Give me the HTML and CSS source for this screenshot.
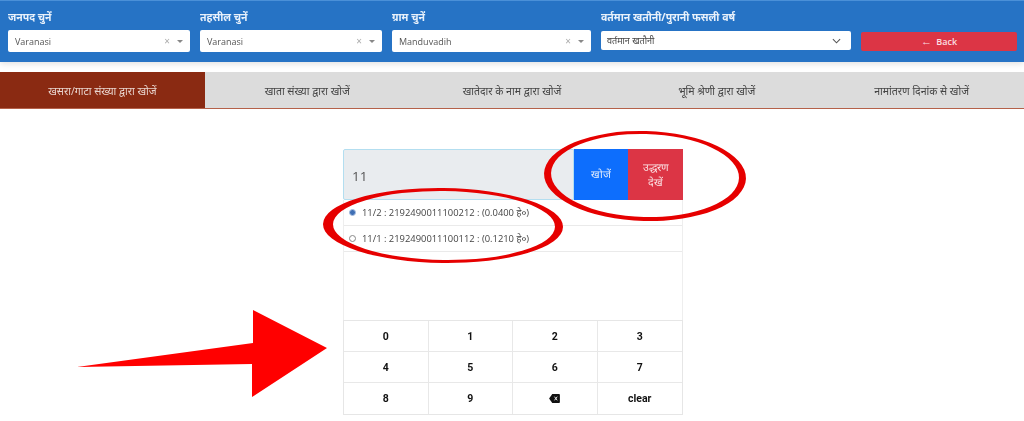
FILE: index.html
```html
<!DOCTYPE html>
<html lang="hi">
<head>
<meta charset="utf-8">
<title>खसरा खोज</title>
<link rel="stylesheet" href="styles.css">
</head>
<body>
<header class="filters">
  <div class="field">
    <label class="field-label">जनपद चुनें</label>
    <div class="combo"><span class="combo-value">Varanasi</span><span class="combo-clear">×</span><span class="combo-caret"></span></div>
  </div>
  <div class="field">
    <label class="field-label">तहसील चुनें</label>
    <div class="combo"><span class="combo-value">Varanasi</span><span class="combo-clear">×</span><span class="combo-caret"></span></div>
  </div>
  <div class="field">
    <label class="field-label">ग्राम चुनें</label>
    <div class="combo"><span class="combo-value">Manduvadih</span><span class="combo-clear">×</span><span class="combo-caret"></span></div>
  </div>
  <div class="field">
    <label class="field-label">वर्तमान खतौनी/पुरानी फसली वर्ष</label>
    <div class="select">
      <span class="select-value">वर्तमान खतौनी</span>
      <svg class="chevron" viewBox="0 0 10 6" width="9" height="6"><path d="M1 1l4 4 4-4" fill="none" stroke="#555" stroke-width="1.2"/></svg>
    </div>
  </div>
  <div class="field field-end">
    <button class="back-btn"><span class="back-arrow">←</span> Back</button>
  </div>
</header>

<nav class="tabs">
  <div class="tab tab-active">खसरा/गाटा संख्या द्वारा खोजें</div>
  <div class="tab">खाता संख्या द्वारा खोजें</div>
  <div class="tab">खातेदार के नाम द्वारा खोजें</div>
  <div class="tab">भूमि श्रेणी द्वारा खोजें</div>
  <div class="tab">नामांतरण दिनांक से खोजें</div>
</nav>

<main class="panel">
  <div class="search-row">
    <div class="search-input">11</div>
    <button class="btn-search">खोजें</button>
    <button class="btn-view">उद्धरण देखें</button>
  </div>
  <div class="results">
    <div class="result"><span class="radio radio-on"></span>11/2 : 2192490011100212 : (0.0400 हे०)</div>
    <div class="result"><span class="radio"></span>11/1 : 2192490011100112 : (0.1210 हे०)</div>
  </div>
  <div class="keypad">
    <div class="key">0</div><div class="key">1</div><div class="key">2</div><div class="key">3</div>
    <div class="key">4</div><div class="key">5</div><div class="key">6</div><div class="key">7</div>
    <div class="key">8</div><div class="key">9</div>
    <div class="key"><svg viewBox="0 0 12 10" width="11" height="9"><path d="M3.5 0H11a1 1 0 0 1 1 1V9a1 1 0 0 1-1 1H3.5L0 5Z" fill="#111"/><path d="M6 3l3 4M9 3L6 7" stroke="#fff" stroke-width="1"/></svg></div>
    <div class="key">clear</div>
  </div>
</main>

<svg class="marks" viewBox="0 0 1024 421" width="1024" height="421">
  <path transform="rotate(1.5 645 176)" fill="#e60000" fill-rule="evenodd" d="M544 176a101 45 0 1 0 202 0a101 45 0 1 0-202 0ZM551 175.5a94 41.5 0 1 0 188 0a94 41.5 0 1 0-188 0Z"/>
  <path transform="rotate(0.7 443 225.5)" fill="#e60000" fill-rule="evenodd" d="M323 225.5a120 37.5 0 1 0 240 0a120 37.5 0 1 0-240 0ZM333 225.5a111 34.5 0 1 0 222 0a111 34.5 0 1 0-222 0Z"/>
  <path d="M77 367L253 343V310L327 348L252 397V364Z" fill="#ff0000"/>
</svg>
</body>
</html>
```

FILE: styles.css
```css
* { box-sizing: border-box; }

html, body {
  margin: 0;
  padding: 0;
  height: 421px;
  overflow: hidden;
  background: #fff;
  font-family: "Open Sans", "Noto Sans", sans-serif;
  position: relative;
}

.filters {
  display: grid;
  grid-template-columns: 182px 182px 199px 250px 156px;
  column-gap: 10px;
  height: 62px;
  padding: 8px 7px 0 8px;
  background: #2673c5;
  border-top: 1px solid #4a90d8;
  box-shadow: 0 2px 6px rgba(0, 0, 0, 0.12);
  filter: blur(0.35px);
}

.field { display: flex; flex-direction: column; }
.field-end { justify-content: flex-end; padding-bottom: 11px; }

.field-label {
  height: 21px;
  font-size: 10.5px;
  font-weight: 700;
  line-height: 17px;
  color: #e8f1fb;
}

.combo {
  display: flex;
  align-items: center;
  height: 22px;
  padding: 0 7px 0 7px;
  background: #fff;
  border-radius: 2px;
  font-size: 9px;
  color: #555;
}

.combo-value { flex: 1; }
.combo-clear { color: #aaa; font-size: 10px; margin-right: 7px; }

.combo-caret {
  width: 0;
  height: 0;
  border-left: 3px solid transparent;
  border-right: 3px solid transparent;
  border-top: 3px solid #888;
}

.select {
  display: flex;
  align-items: center;
  justify-content: space-between;
  height: 19px;
  margin-top: 1px;
  padding: 0 10px 0 6px;
  background: #fff;
  border-radius: 2px;
  font-size: 9px;
  color: #444;
}

.back-btn {
  height: 19px;
  border: 0;
  border-radius: 2px;
  background: #dc3545;
  color: #fbdfe2;
  font: 600 9px "Open Sans", sans-serif;
}

.back-arrow { margin-right: 2px; font-size: 11px; line-height: 9px; }

.tabs {
  display: grid;
  grid-template-columns: repeat(5, 1fr);
  height: 37px;
  margin-top: 10px;
  background: #dcdcdc;
  border-bottom: 1px solid #b5614a;
  filter: blur(0.35px);
}

.tab {
  display: flex;
  align-items: center;
  justify-content: center;
  padding-top: 2px;
  font-size: 10.5px;
  color: #444;
}

.tab-active { background: #8a2a12; color: #e9d5cf; }

.panel {
  width: 340px;
  margin: 40px 0 0 343px;
  filter: blur(0.35px);
}

.search-row { display: flex; height: 51px; }

.search-input {
  display: flex;
  align-items: center;
  width: 231px;
  padding: 3px 0 0 8px;
  background: #e9ecef;
  border: 1px solid #b3def0;
  border-radius: 2px 0 0 2px;
  font-size: 13.5px;
  color: #555;
}

.btn-search, .btn-view {
  border: 0;
  padding: 0 8px;
  font: 10.5px/15px "Open Sans", sans-serif;
  color: #e6eefc;
}

.btn-search { width: 54px; background: #0d6efd; }
.btn-view { flex: 1; background: #dc3545; color: #fbe3e5; }

.results {
  height: 120px;
  border-left: 1px solid #eee;
  border-right: 1px solid #eee;
}

.result {
  display: flex;
  align-items: center;
  height: 26px;
  padding-left: 5px;
  border-bottom: 1px solid #eaeaea;
  font-size: 9.4px;
  color: #444;
}

.radio {
  width: 7px;
  height: 7px;
  margin-right: 6px;
  border: 1px solid #888;
  border-radius: 50%;
  background: #fff;
}

.radio-on { background: #3f6fb5; border-color: #a9bfe0; }

.keypad {
  display: grid;
  grid-template-columns: repeat(4, 1fr);
  grid-auto-rows: 31px;
  border: 1px solid #e6e6e6;
}

.key {
  display: flex;
  align-items: center;
  justify-content: center;
  border-right: 1px solid #e8e8e8;
  border-bottom: 1px solid #e8e8e8;
  font-family: Roboto, sans-serif;
  font-size: 10.5px;
  font-weight: 700;
  color: #111;
}

.key:nth-child(4n) { border-right: 0; }
.key:nth-last-child(-n+4) { border-bottom: 0; }

.marks {
  position: absolute;
  left: 0;
  top: 0;
  pointer-events: none;
}
```
